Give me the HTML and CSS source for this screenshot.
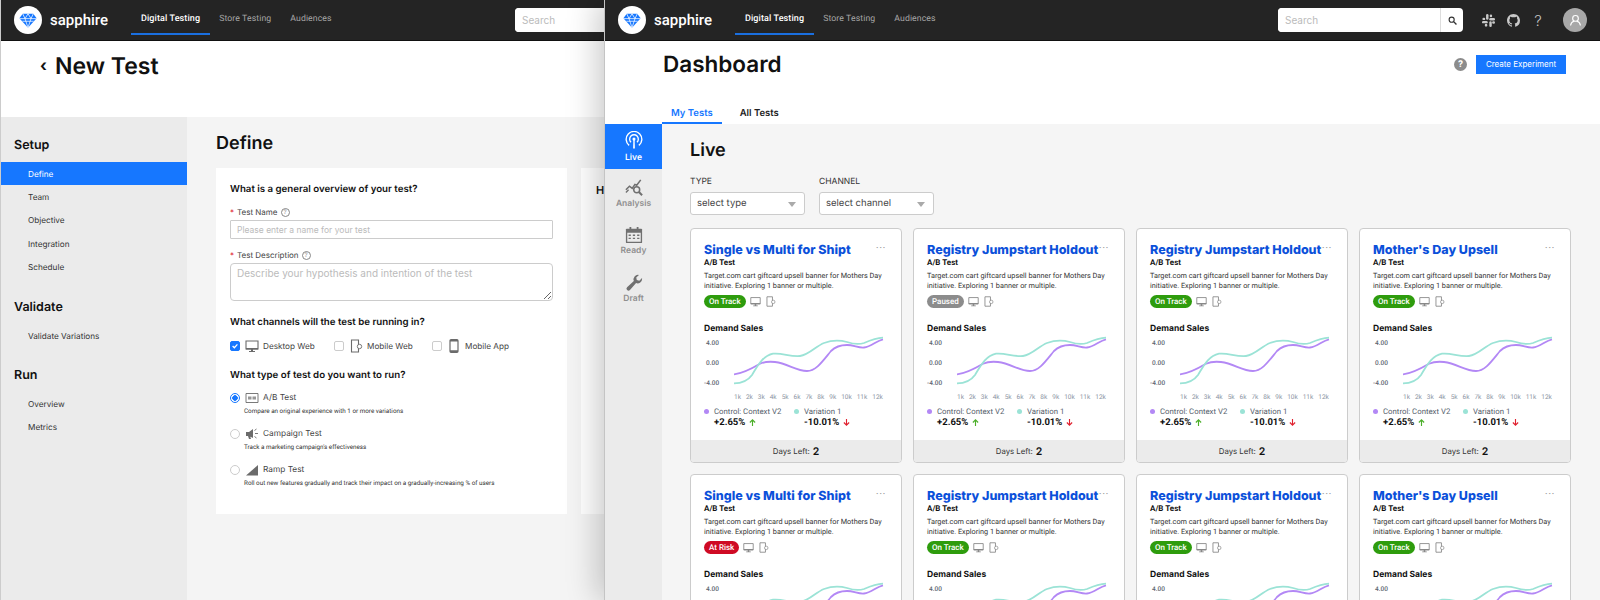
FILE: index.html
```html
<!DOCTYPE html>
<html lang="en">
<head>
    <meta charset="UTF-8">
    <meta name="viewport" content="width=device-width, initial-scale=1.0">
    <title>Sapphire</title>
    <link rel="stylesheet" href="styles.css">
</head>
<body>
    <svg class="sprite" xmlns="http://www.w3.org/2000/svg">
        <symbol id="gem" viewBox="0 0 24 20">
            <path fill="#1677ff" d="M5 1h14l4.500 6L12 19.500.5 7z"/>
            <path fill="none" stroke="#fff" stroke-width="1" d="M.5 7.500h23M5 1l3 6.500L12 1l4 6.500L19 1M8 7.500l4 12 4-12M4.500 11h15"/>
        </symbol>
        <symbol id="search" viewBox="0 0 16 16">
            <circle cx="6.500" cy="6.500" r="4.500" fill="none" stroke="currentColor" stroke-width="2"/>
            <path stroke="currentColor" stroke-width="2.500" d="M10 10l5 5"/>
        </symbol>
        <symbol id="slack" viewBox="0 0 16 16">
            <g fill="currentColor">
                <rect x="5" y="0" width="3" height="7" rx="1.500"/>
                <rect x="9" y="5" width="7" height="3" rx="1.500"/>
                <rect x="0" y="8.500" width="7" height="3" rx="1.500"/>
                <rect x="9" y="9" width="3" height="7" rx="1.500"/>
                <rect x="9.500" y="0.500" width="3" height="3.500" rx="1.500"/>
                <rect x="0.500" y="4.500" width="3.500" height="3" rx="1.500"/>
                <rect x="3.500" y="12" width="3" height="3.500" rx="1.500"/>
                <rect x="12.500" y="9" width="3.500" height="3" rx="1.500"/>
            </g>
        </symbol>
        <symbol id="github" viewBox="0 0 16 16">
            <path fill="currentColor" d="M8 0C3.580 0 0 3.580 0 8c0 3.540 2.290 6.530 5.470 7.590.4.070.55-.17.55-.38 0-.19-.01-.82-.01-1.490-2.010.37-2.530-.49-2.690-.94-.09-.23-.48-.94-.82-1.130-.28-.15-.68-.52-.01-.53.63-.01 1.080.58 1.230.82.72 1.210 1.870.87 2.330.66.070-.52.28-.87.51-1.070-1.780-.2-3.640-.89-3.640-3.950 0-.87.31-1.590.82-2.150-.08-.2-.36-1.020.08-2.120 0 0 .67-.21 2.200.82.64-.18 1.320-.27 2-.27.68 0 1.360.09 2 .27 1.530-1.040 2.200-.82 2.200-.82.44 1.100.16 1.920.08 2.120.51.56.82 1.270.82 2.150 0 3.070-1.870 3.750-3.650 3.950.29.25.54.73.54 1.480 0 1.070-.01 1.930-.01 2.200 0 .21.15.46.55.38A8.013 8.013 0 0016 8c0-4.420-3.580-8-8-8z"/>
        </symbol>
        <symbol id="user" viewBox="0 0 24 24">
            <circle cx="12" cy="9" r="4" fill="none" stroke="#fff" stroke-width="1.600"/>
            <path fill="none" stroke="#fff" stroke-width="1.600" d="M5 19c.5-3.500 3-5.500 5-6M19 19c-.5-3.500-3-5.500-5-6"/>
        </symbol>
        <symbol id="desktop" viewBox="0 0 14 14">
            <path fill="none" stroke="currentColor" stroke-width="1.100" d="M1 2h12v8H1z"/>
            <path fill="currentColor" d="M1 9h12v1.500H1zM6 10.500h2V12H6zM4 12h6v1H4z"/>
        </symbol>
        <symbol id="mobile-web" viewBox="0 0 14 14">
            <path fill="none" stroke="currentColor" stroke-width="1.100" d="M2.500 1h7v12h-7z"/>
            <circle cx="10.500" cy="7.500" r="2.200" fill="#fff" stroke="currentColor" stroke-width="0.900"/>
        </symbol>
        <symbol id="mobile" viewBox="0 0 14 14">
            <rect x="3" y="0.700" width="8" height="12.600" rx="1" fill="none" stroke="currentColor" stroke-width="1.200"/>
            <path fill="currentColor" d="M3 1h8v1.500H3zM3 11.300h8V13H3z"/>
        </symbol>
        <symbol id="ab" viewBox="0 0 14 14">
            <path fill="none" stroke="currentColor" stroke-width="0.900" d="M1 2.500h12v9H1z"/>
            <path fill="currentColor" opacity="0.700" d="M3 5.500h3.500v3H3zM7.500 5.500H11v3H7.500z"/>
        </symbol>
        <symbol id="megaphone" viewBox="0 0 14 14">
            <path fill="currentColor" d="M1 5h3l4-3v9L4 9H1zM3 9h2l1 3H4z"/>
            <path fill="none" stroke="currentColor" stroke-width="0.900" d="M10 6.500h3M9.500 3.500l2-1.500M9.500 9.500l2 1.500"/>
        </symbol>
        <symbol id="ramp" viewBox="0 0 14 14">
            <path fill="currentColor" d="M1 12.500L13 2v10.500z"/>
        </symbol>
        <symbol id="live" viewBox="0 0 20 20">
            <g fill="none" stroke="currentColor" stroke-width="1.500">
                <path d="M4.600 16a8.700 8.700 0 1 1 10.800 0"/>
                <path d="M6.700 12.500a4.800 4.800 0 1 1 6.600 0"/>
            </g>
            <circle cx="10" cy="9" r="1.700" fill="currentColor"/>
            <path fill="currentColor" d="M9.300 10h1.400l.3 9.500H9z"/>
        </symbol>
        <symbol id="analysis" viewBox="0 0 20 20">
            <path fill="none" stroke="currentColor" stroke-width="1.700" d="M1 12l4-4 3 2.500L11 6l2 1 4.500-6"/>
            <circle cx="13" cy="12" r="3.300" fill="none" stroke="currentColor" stroke-width="1.700"/>
            <path stroke="currentColor" stroke-width="2.200" d="M15.500 14.500l3.500 3.500"/>
            <path fill="none" stroke="currentColor" stroke-width="1.500" d="M1 15l3-3"/>
        </symbol>
        <symbol id="calendar" viewBox="0 0 20 20">
            <path fill="currentColor" d="M2 3h16a1 1 0 0 1 1 1v14a1 1 0 0 1-1 1H2a1 1 0 0 1-1-1V4a1 1 0 0 1 1-1z"/>
            <path fill="#ebebeb" d="M2.500 7.500h15V17.500h-15z"/>
            <path fill="currentColor" d="M5 1h2v3H5zM13 1h2v3h-2zM4 9.500h2.500V11H4zM8.700 9.500h2.500V11H8.700zM13.500 9.500H16V11h-2.500zM4 13h2.500v1.500H4zM8.700 13h2.500v1.500H8.700zM13.500 13H16v1.500h-2.500z"/>
        </symbol>
        <symbol id="wrench" viewBox="0 0 20 20">
            <path fill="currentColor" d="M19 5.200a5 5 0 0 1-6.700 4.900L5.500 17.700a2.200 2.200 0 0 1-3.200-3.100l7.500-6.900A5 5 0 0 1 15.500 1l-3 3 .6 2.800 2.800.6 3-3c0 .3.100.5.100.8z"/>
        </symbol>
        <symbol id="curves" viewBox="0 0 150 52">
            <path fill="none" stroke="#b388f5" stroke-width="1.800" d="M0 38.300C9 37.500 17 33 26 27.700 31 25.500 36 25.500 41 26 54 27.500 62 35 73 35 82 35 88 26 97 15 102 10 108 9 113 9 120 9 124 12 130 11.500 137 11 142 5 149 3.300"/>
            <path fill="none" stroke="#9be3d6" stroke-width="1.800" d="M0 47.300C7 47.300 13 46 18 39 23 31 28 20 39 17.700 48 16.500 56 21 66 20 75 19 82 10 90 7 98 4 106 4 113 6 119 8 124 9 130 7 137 4 142 2 149 1.700"/>
        </symbol>
        <symbol id="up" viewBox="0 0 8 8">
            <path fill="none" stroke="#4caf2a" stroke-width="1.300" d="M4 8V1M1 4l3-3 3 3"/>
        </symbol>
        <symbol id="down" viewBox="0 0 8 8">
            <path fill="none" stroke="#e0212f" stroke-width="1.300" d="M4 0v7M1 4l3 3 3-3"/>
        </symbol>
    </svg>

    <div class="window window-new">
        <header class="topbar">
            <div class="brand">
                <span class="logo"><svg class="logo-gem"><use href="#gem"/></svg></span>
                <span class="brand-name">sapphire</span>
            </div>
            <nav class="topnav">
                <a class="active">Digital Testing</a>
                <a>Store Testing</a>
                <a>Audiences</a>
            </nav>
            <div class="search">
                <input type="text" placeholder="Search">
                <span class="search-btn"><svg><use href="#search"/></svg></span>
            </div>
            <span class="top-icon"><svg><use href="#slack"/></svg></span>
            <span class="top-icon"><svg><use href="#github"/></svg></span>
            <span class="top-icon top-help">?</span>
            <span class="avatar"><svg><use href="#user"/></svg></span>
        </header>

        <div class="new-head">
            <span class="back">&#8249;</span>
            <h1>New Test</h1>
        </div>

        <div class="new-body">
            <aside class="steps">
                <h3>Setup</h3>
                <a class="active">Define</a>
                <a>Team</a>
                <a>Objective</a>
                <a>Integration</a>
                <a>Schedule</a>
                <h3>Validate</h3>
                <a>Validate Variations</a>
                <h3>Run</h3>
                <a>Overview</a>
                <a>Metrics</a>
            </aside>
            <main class="define">
                <h2>Define</h2>
                <div class="define-cards">
                    <section class="form-card">
                        <h4>What is a general overview of your test?</h4>
                        <label class="field-label"><span class="req">*</span> Test Name <span class="hint">?</span></label>
                        <input class="text-input" type="text" placeholder="Please enter a name for your test">
                        <label class="field-label label-desc"><span class="req">*</span> Test Description <span class="hint">?</span></label>
                        <textarea class="text-area" placeholder="Describe your hypothesis and intention of the test"></textarea>

                        <h4 class="channels-title">What channels will the test be running in?</h4>
                        <div class="channels">
                            <span class="check checked"><svg viewBox="0 0 10 10"><path fill="none" stroke="#fff" stroke-width="1.600" d="M2 5l2.200 2.200L8 3"/></svg></span>
                            <svg class="opt-icon"><use href="#desktop"/></svg>
                            <span class="channel channel-desktop">Desktop Web</span>
                            <span class="check"></span>
                            <svg class="opt-icon"><use href="#mobile-web"/></svg>
                            <span class="channel channel-mobile">Mobile Web</span>
                            <span class="check"></span>
                            <svg class="opt-icon"><use href="#mobile"/></svg>
                            <span class="channel">Mobile App</span>
                        </div>

                        <h4 class="types-title">What type of test do you want to run?</h4>
                        <div class="type-row">
                            <span class="radio checked"></span>
                            <svg class="opt-icon"><use href="#ab"/></svg>
                            <span class="type-name">A/B Test</span>
                        </div>
                        <p class="type-desc">Compare an original experience with 1 or more variations</p>
                        <div class="type-row">
                            <span class="radio"></span>
                            <svg class="opt-icon"><use href="#megaphone"/></svg>
                            <span class="type-name">Campaign Test</span>
                        </div>
                        <p class="type-desc">Track a marketing campaign's effectiveness</p>
                        <div class="type-row">
                            <span class="radio"></span>
                            <svg class="opt-icon"><use href="#ramp"/></svg>
                            <span class="type-name">Ramp Test</span>
                        </div>
                        <p class="type-desc">Roll out new features gradually and track their impact on a gradually-increasing % of users</p>
                    </section>
                    <section class="form-card form-card-next">
                        <h4 class="next-title">How</h4>
                    </section>
                </div>
            </main>
        </div>
    </div>

    <div class="window window-dash">
        <header class="topbar">
            <div class="brand">
                <span class="logo"><svg class="logo-gem"><use href="#gem"/></svg></span>
                <span class="brand-name">sapphire</span>
            </div>
            <nav class="topnav">
                <a class="active">Digital Testing</a>
                <a>Store Testing</a>
                <a>Audiences</a>
            </nav>
            <div class="search">
                <input type="text" placeholder="Search">
                <span class="search-btn"><svg><use href="#search"/></svg></span>
            </div>
            <span class="top-icon"><svg><use href="#slack"/></svg></span>
            <span class="top-icon"><svg><use href="#github"/></svg></span>
            <span class="top-icon top-help">?</span>
            <span class="avatar"><svg><use href="#user"/></svg></span>
        </header>

        <div class="dash-head">
            <div class="dash-title">
                <h1>Dashboard</h1>
                <span class="dash-help">?</span>
                <button class="create">Create Experiment</button>
            </div>
            <div class="tabs">
                <a class="active">My Tests</a>
                <a>All Tests</a>
            </div>
        </div>

        <div class="dash-body">
            <aside class="rail">
                <a class="active"><svg><use href="#live"/></svg>Live</a>
                <a><svg><use href="#analysis"/></svg>Analysis</a>
                <a><svg><use href="#calendar"/></svg>Ready</a>
                <a><svg><use href="#wrench"/></svg>Draft</a>
            </aside>
            <main class="live">
                <h2>Live</h2>
                <div class="filters">
                    <div class="filter">
                        <span class="filter-label">TYPE</span>
                        <div class="select">select type</div>
                    </div>
                    <div class="filter">
                        <span class="filter-label">CHANNEL</span>
                        <div class="select">select channel</div>
                    </div>
                </div>
                <div class="cards" id="cards"></div>
            </main>
        </div>
    </div>

    <script src="cards.js"></script>
</body>
</html>
```

FILE: styles.css
```css
* {
    box-sizing: border-box;
}
html, body {
    height: 600px;
    margin: 0;
    overflow: hidden;
}
body {
    font-family: Inter, "Liberation Sans", sans-serif;
    color: #111;
    background: #f4f4f4;
    text-rendering: geometricPrecision;
}
h1, h2, h3, h4, p {
    margin: 0;
}
.sprite {
    display: none;
}

/* desktop windows */
.window {
    position: absolute;
    top: 0;
    height: 600px;
    overflow: hidden;
    display: flex;
    flex-direction: column;
    background: #fff;
}
.window-new {
    left: 0;
    width: 837px;
    border-left: 1px solid #ccc;
}
.window-dash {
    left: 604px;
    width: 996px;
    overflow: visible;
    box-shadow: -6px 0 30px rgba(0, 0, 0, 0.22);
    border-left: 1px solid #c4c4c4;
}

/* top bar */
.topbar {
    display: flex;
    align-items: center;
    flex: none;
    height: 41px;
    padding: 0 13px;
    background: #242424;
    color: #fff;
    border-bottom: 1px solid #111;
}
.brand {
    display: flex;
    align-items: center;
    width: 117px;
    gap: 8px;
}
.logo {
    display: flex;
    align-items: center;
    justify-content: center;
    width: 28px;
    height: 28px;
    border-radius: 50%;
    background: #fff;
}
.logo-gem {
    width: 18px;
    height: 15px;
}
.brand-name {
    font-family: Roboto, sans-serif;
    font-size: 15px;
    font-weight: 500;
}
.topnav {
    display: flex;
    align-self: stretch;
}
.topnav a {
    display: flex;
    align-items: center;
    height: 35px;
    padding: 4px 10px 0 9px;
    font-family: Roboto, sans-serif;
    font-size: 8.7px;
    font-weight: 400;
    letter-spacing: 0.1px;
    color: #a6a6a6;
    border-bottom: 2px solid transparent;
}
.topnav a.active {
    padding-left: 10px;
    color: #fff;
    font-size: 9px;
    font-weight: 500;
    border-bottom-color: #1a6fe0;
}
.search {
    display: flex;
    width: 185px;
    height: 24px;
    margin-left: auto;
    margin-right: 18px;
    background: #fff;
    border-radius: 4px;
    overflow: hidden;
}
.search input {
    flex: 1;
    min-width: 0;
    padding: 0 7px;
    border: none;
    border-right: 1px solid #ddd;
    font-family: inherit;
    font-size: 10px;
    outline: none;
}
.search input::placeholder {
    color: #bbb;
}
.search-btn {
    display: flex;
    align-items: center;
    justify-content: center;
    width: 22px;
    color: #333;
}
.search-btn svg {
    width: 9px;
    height: 9px;
}
.top-icon {
    display: flex;
    align-items: center;
    justify-content: center;
    width: 14px;
    height: 14px;
    margin-right: 11px;
    color: #c8c8c8;
}
.top-icon svg {
    width: 13px;
    height: 13px;
}
.top-help {
    margin-right: 18px;
    font-size: 15px;
    font-weight: 300;
}
.avatar {
    display: flex;
    align-items: center;
    justify-content: center;
    width: 24px;
    height: 24px;
    border-radius: 50%;
    background: #a8a8a8;
}
.avatar svg {
    width: 17px;
    height: 17px;
}

/* new test window */
.new-head {
    display: flex;
    align-items: flex-start;
    flex: none;
    height: 76px;
    padding: 10px 0 0 39px;
    background: #fff;
}
.back {
    width: 15px;
    font-size: 16px;
    font-weight: 700;
    line-height: 28px;
}
.new-head h1 {
    font-size: 23px;
    font-weight: 600;
    line-height: 30px;
}
.new-body {
    display: flex;
    flex: 1;
    min-height: 0;
}
.steps {
    display: flex;
    flex-direction: column;
    flex: none;
    width: 186px;
    padding-top: 20px;
    background: #ebebeb;
}
.steps h3 {
    flex: none;
    height: 25px;
    padding-left: 13px;
    font-size: 12.5px;
    font-weight: 600;
    line-height: 17px;
}
.steps a {
    display: flex;
    align-items: center;
    height: 23.4px;
    flex: none;
    padding-left: 27px;
    font-size: 8.2px;
    color: #333;
}
.steps a.active {
    background: #1677ff;
    color: #fff;
}
.steps a + h3 {
    margin-top: 20px;
}
.define {
    flex: 1;
    padding: 15px 0 0 29px;
    background: #f4f4f4;
}
.define h2 {
    height: 36px;
    font-size: 18px;
    font-weight: 600;
    line-height: 24px;
}
.define-cards {
    display: flex;
    gap: 14px;
}
.form-card {
    flex: none;
    width: 351px;
    height: 346px;
    padding: 16px 14px;
    background: #fff;
}
.form-card-next {
    width: 300px;
}
.form-card h4 {
    font-size: 9.7px;
    font-weight: 600;
    line-height: 12px;
}
.form-card .next-title {
    padding-left: 1px;
    font-size: 11px;
}
.field-label {
    display: flex;
    align-items: center;
    gap: 3px;
    height: 12px;
    margin-top: 10px;
    font-size: 8px;
    color: #444;
}
.req {
    color: #e0212f;
}
.hint {
    display: inline-flex;
    align-items: center;
    justify-content: center;
    width: 9px;
    height: 9px;
    border: 1px solid #888;
    border-radius: 50%;
    font-size: 6px;
    color: #888;
}
.text-input {
    display: block;
    width: 323px;
    height: 19px;
    margin-top: 2px;
    padding: 0 6px;
    border: 1px solid #ccc;
    border-radius: 1px;
    font-family: inherit;
    font-size: 8.5px;
}
.text-input::placeholder,
.text-area::placeholder {
    color: #bbb;
}
.label-desc {
    margin-top: 10px;
}
.text-area {
    display: block;
    width: 323px;
    height: 38px;
    margin-top: 2px;
    padding: 3px 6px;
    border: 1px solid #ccc;
    border-radius: 4px;
    font-family: inherit;
    font-size: 10px;
}
.channels-title {
    margin-top: 16px;
}
.channels {
    display: flex;
    align-items: center;
    height: 14px;
    margin-top: 10px;
}
.check {
    display: flex;
    flex: none;
    width: 10px;
    height: 10px;
    border: 1px solid #ccc;
    border-radius: 2px;
}
.check.checked {
    background: #1677ff;
    border-color: #1677ff;
}
.check.checked svg {
    width: 8px;
    height: 8px;
}
.opt-icon {
    flex: none;
    width: 14px;
    height: 14px;
    margin: 0 4px 0 5px;
    color: #6b6b6b;
}
.channel {
    font-size: 8.2px;
    color: #444;
}
.channel-desktop {
    width: 71px;
}
.channel-mobile {
    width: 65px;
}
.types-title {
    margin-top: 17px;
    margin-bottom: -1px;
}
.type-row {
    display: flex;
    align-items: center;
    height: 14px;
    margin-top: 10px;
}
.radio {
    flex: none;
    width: 10px;
    height: 10px;
    border: 1px solid #ccc;
    border-radius: 50%;
}
.radio.checked {
    border-color: #1677ff;
    background: radial-gradient(circle, #1677ff 2.5px, #fff 3px);
}
.type-name {
    font-size: 8.3px;
    color: #444;
}
.type-desc {
    height: 11px;
    margin: 1px 0 10px 14px;
    font-family: Roboto, sans-serif;
    font-size: 6.3px;
    line-height: 11px;
    color: #333;
}

/* dashboard window */
.dash-head {
    display: flex;
    flex-direction: column;
    flex: none;
    height: 83px;
    background: #fff;
}
.dash-title {
    display: flex;
    align-items: center;
    padding: 8px 34px 0 58px;
}
.dash-title h1 {
    flex: 1;
    height: 30px;
    font-size: 22.5px;
    font-weight: 600;
    line-height: 32px;
}
.dash-help {
    display: flex;
    align-items: center;
    justify-content: center;
    width: 13px;
    height: 13px;
    margin-right: 9px;
    border-radius: 50%;
    background: #8c8c8c;
    color: #fff;
    font-size: 9px;
    font-weight: 700;
}
.create {
    width: 90px;
    height: 19px;
    padding: 0;
    border: none;
    background: #1677ff;
    color: #fff;
    font-family: inherit;
    font-size: 8px;
}
.tabs {
    display: flex;
    gap: 9px;
    margin: auto 0 0 57px;
}
.tabs a {
    height: 22px;
    padding: 5px 9px 0;
    font-size: 9.5px;
    font-weight: 600;
    line-height: 14px;
    color: #222;
    border-bottom: 2px solid transparent;
}
.tabs a.active {
    color: #1677ff;
    border-bottom-color: #1677ff;
}
.dash-body {
    display: flex;
    flex: 1;
    min-height: 0;
}
.rail {
    display: flex;
    flex-direction: column;
    gap: 2.5px;
    flex: none;
    width: 57px;
    background: #ebebeb;
}
.rail a {
    display: flex;
    flex-direction: column;
    align-items: center;
    height: 45px;
    padding-top: 7px;
    font-size: 8.5px;
    font-weight: 600;
    line-height: 10px;
    color: #8f8f8f;
}
.rail svg {
    width: 18px;
    height: 18px;
    margin-bottom: 2px;
    color: #707070;
}
.rail a.active {
    background: #1677ff;
    color: #fff;
}
.rail a.active svg {
    margin-bottom: 4px;
    color: #fff;
}
.live {
    flex: 1;
    padding: 16px 0 0 28px;
    background: #f5f5f5;
}
.live h2 {
    font-size: 18px;
    font-weight: 600;
    line-height: 22px;
}
.filters {
    display: flex;
    gap: 14px;
    margin-top: 15px;
}
.filter-label {
    display: block;
    font-size: 8.5px;
    line-height: 11px;
    color: #333;
}
.select {
    position: relative;
    width: 115px;
    height: 23px;
    margin-top: 4px;
    padding-left: 6px;
    border: 1px solid #ccc;
    border-radius: 3px;
    background: #fff;
    font-size: 9.5px;
    line-height: 21px;
    color: #444;
}
.select::after {
    content: "";
    position: absolute;
    right: 8px;
    top: 9px;
    border-left: 4px solid transparent;
    border-right: 4px solid transparent;
    border-top: 5px solid #aaa;
}
.cards {
    display: grid;
    grid-template-columns: repeat(4, 212px);
    gap: 11px;
    margin-top: 13px;
}

/* test card */
.card {
    position: relative;
    display: flex;
    flex-direction: column;
    height: 235px;
    padding: 15px 13px 0;
    background: #fff;
    border: 1px solid #ccc;
    border-radius: 4px;
    overflow: hidden;
}
.card-title {
    font-size: 12.5px;
    font-weight: 800;
    line-height: 14px;
    white-space: nowrap;
    color: #0b50da;
}
.card-dots {
    position: absolute;
    right: 15px;
    top: 12px;
    font-size: 10px;
    line-height: 14px;
    letter-spacing: 0.5px;
    color: #999;
}
.card-type {
    font-family: Roboto, sans-serif;
    font-size: 8px;
    font-weight: 700;
    line-height: 10px;
}
.card-desc {
    margin-top: 3px;
    font-family: Roboto, sans-serif;
    font-size: 7.3px;
    line-height: 10px;
    white-space: nowrap;
    color: #333;
}
.card-status {
    display: flex;
    align-items: center;
    gap: 4px;
    height: 13px;
    margin-top: 3.5px;
    color: #888;
}
.card-status svg {
    width: 11px;
    height: 11px;
}
.badge {
    padding: 0 5px;
    border-radius: 7px;
    font-family: Roboto, sans-serif;
    font-size: 8px;
    font-weight: 500;
    line-height: 13px;
    color: #fff;
}
.badge-track {
    background: #2e9c0d;
}
.badge-paused {
    background: #8c8c8c;
}
.badge-risk {
    background: #cf0a24;
}
.chart-title {
    margin-top: 15px;
    font-size: 8.5px;
    font-weight: 700;
    line-height: 12px;
}
.chart {
    display: flex;
    height: 52px;
    margin-top: 1px;
}
.chart-y {
    flex: none;
    width: 30px;
    margin-top: -3px;
    padding-right: 15px;
    text-align: right;
    font-family: Roboto, sans-serif;
    font-size: 6.5px;
    font-weight: 500;
    line-height: 20px;
    color: #5c6470;
}
.chart-lines {
    width: 150px;
    height: 52px;
}
.chart-x {
    display: flex;
    justify-content: space-between;
    margin: 4px 5px 0 30px;
    font-family: Roboto, sans-serif;
    font-size: 6.5px;
    line-height: 10px;
    color: #8a93a3;
}
.legend {
    display: grid;
    grid-template-columns: 90px 1fr;
    margin-top: 5px;
}
.legend-name {
    display: flex;
    align-items: center;
    gap: 5px;
    font-family: Roboto, sans-serif;
    font-size: 7.8px;
    line-height: 10px;
    color: #555e6b;
}
.legend-name::before {
    content: "";
    width: 5px;
    height: 5px;
    border-radius: 50%;
}
.legend-control::before {
    background: #b388f5;
}
.legend-variation::before {
    background: #9be3d6;
}
.legend-value {
    display: flex;
    align-items: center;
    gap: 4px;
    padding-left: 10px;
    font-family: Roboto, sans-serif;
    font-size: 9.5px;
    font-weight: 700;
    line-height: 12px;
}
.legend-value svg {
    width: 7px;
    height: 7px;
}
.card-foot {
    display: flex;
    align-items: center;
    justify-content: center;
    gap: 3px;
    flex: none;
    height: 22px;
    margin: auto -13px 0;
    background: #ebebeb;
    font-size: 7.8px;
    color: #333;
}
.card-foot b {
    font-size: 10.5px;
    font-weight: 600;
    color: #111;
}
```

FILE: cards.js
```js
const tests = [
    { title: 'Single vs Multi for Shipt', status: 'On Track', badge: 'badge-track' },
    { title: 'Registry Jumpstart Holdout', status: 'Paused', badge: 'badge-paused' },
    { title: 'Registry Jumpstart Holdout', status: 'On Track', badge: 'badge-track' },
    { title: "Mother's Day Upsell", status: 'On Track', badge: 'badge-track' },
    { title: 'Single vs Multi for Shipt', status: 'At Risk', badge: 'badge-risk' },
    { title: 'Registry Jumpstart Holdout', status: 'On Track', badge: 'badge-track' },
    { title: 'Registry Jumpstart Holdout', status: 'On Track', badge: 'badge-track' },
    { title: "Mother's Day Upsell", status: 'On Track', badge: 'badge-track' }
];

const ticks = ['1k', '2k', '3k', '4k', '5k', '6k', '7k', '8k', '9k', '10k', '11k', '12k'];

function cardHtml(test) {
    return `
        <article class="card">
            <span class="card-dots">&middot;&middot;&middot;</span>
            <h3 class="card-title">${test.title}</h3>
            <p class="card-type">A/B Test</p>
            <p class="card-desc">Target.com cart giftcard upsell banner for Mothers Day<br>initiative. Exploring 1 banner or multiple.</p>
            <div class="card-status">
                <span class="badge ${test.badge}">${test.status}</span>
                <svg><use href="#desktop"/></svg>
                <svg><use href="#mobile-web"/></svg>
            </div>
            <h4 class="chart-title">Demand Sales</h4>
            <div class="chart">
                <div class="chart-y">4.00<br>0.00<br>-4.00</div>
                <svg class="chart-lines"><use href="#curves"/></svg>
            </div>
            <div class="chart-x">${ticks.map(t => `<span>${t}</span>`).join('')}</div>
            <div class="legend">
                <span class="legend-name legend-control">Control: Context V2</span>
                <span class="legend-name legend-variation">Variation 1</span>
                <span class="legend-value">+2.65% <svg><use href="#up"/></svg></span>
                <span class="legend-value">-10.01% <svg><use href="#down"/></svg></span>
            </div>
            <div class="card-foot">Days Left: <b>2</b></div>
        </article>`;
}

document.getElementById('cards').innerHTML = tests.map(cardHtml).join('');
```
